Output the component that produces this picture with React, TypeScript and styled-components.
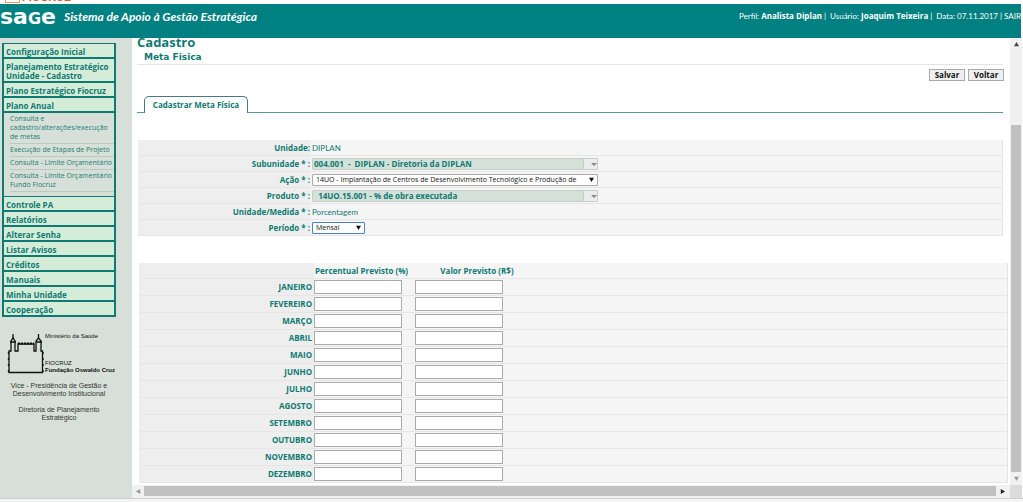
import React from 'react';
import styled, { createGlobalStyle } from 'styled-components';

const teal = '#0f7a72';
const boldFace = '"Open Sans", "Noto Sans", sans-serif';
const textFace = 'Lato, "Open Sans", sans-serif';

const GlobalStyle = createGlobalStyle`
  *, *::before, *::after { box-sizing: border-box; }
  body {
    margin: 0;
    background: #fff;
    color: ${teal};
    font: 8px/12px ${textFace};
  }
`;

const Page = styled.div`
  display: flex;
  flex-direction: column;
  min-height: 100vh;
`;

const PortalStrip = styled.div`
  display: flex;
  align-items: flex-end;
  gap: 2px;
  height: 4px;
  padding-left: 5px;
  overflow: hidden;
  color: #e4572e;
  font: bold 11px/14px "Liberation Sans", sans-serif;
  svg { flex: none; margin-bottom: 1px; }
`;

const Header = styled.header`
  display: flex;
  align-items: flex-start;
  height: 34px;
  margin-right: 2px;
  background: #008080;
  color: #fff;
`;

const Brand = styled.div`
  display: flex;
  align-items: baseline;
  width: 64px;
  padding-top: 1px;
  font: bold 22px/24px "DejaVu Sans", sans-serif;
  small { font-size: 16px; }
`;

const SystemName = styled.h1`
  flex: 1;
  margin: 0;
  padding-top: 5px;
  font: italic bold 12px/16px Lato, sans-serif;
  white-space: nowrap;
`;

const Session = styled.div`
  display: flex;
  gap: 4px;
  padding-top: 6px;
  white-space: nowrap;
  b { font-family: ${boldFace}; }
  a { color: #fff; text-decoration: none; }
`;

const Body = styled.div`
  display: flex;
  flex: 1;
`;

const Sidebar = styled.aside`
  flex: none;
  width: 132px;
  padding: 5px 16px 0 2px;
  background: #d6e0d9;
`;

const Menu = styled.nav`
  border: 1px solid ${teal};
  border-width: 1px 2px 0;
`;

const MenuLink = styled.a`
  display: block;
  padding: 3px 2px 1px;
  border-bottom: 2px solid ${teal};
  background: #d5ecd9;
  color: ${teal};
  font: bold 8px/9px ${boldFace};
  text-decoration: none;
`;

const Submenu = styled.div`
  display: flex;
  flex-direction: column;
  padding: 0 0 4px 6px;
  border-bottom: 1px solid ${teal};
`;

const SubLink = styled.a`
  padding: 1px 0 2px;
  border-bottom: 1px solid #bccac1;
  color: #1d7b72;
  font: 7px/9px ${boldFace};
  text-decoration: none;
  white-space: nowrap;
`;

const Institution = styled.div`
  display: flex;
  gap: 1px;
  margin: 16px 0 0 5px;
  color: #111;
  font: 6px/7px "Liberation Sans", sans-serif;
  white-space: nowrap;
`;

const InstitutionText = styled.div`
  display: flex;
  flex-direction: column;
  justify-content: space-between;
`;

const Department = styled.p`
  margin: 8px 0 0;
  color: #333;
  font: 7px/8px "Liberation Sans", sans-serif;
  text-align: center;
`;

const Frame = styled.div`
  display: grid;
  flex: 1;
  min-width: 0;
  grid-template-columns: 1fr 12px;
  grid-template-rows: 1fr 13px;
  margin-right: 1px;
`;

const Content = styled.main`
  min-width: 0;
  padding: 0 2px 1px 5px;
`;

const Title = styled.h2`
  margin: -3px 0 0;
  font: bold 13px/14px ${boldFace};
`;

const Subtitle = styled.h3`
  margin: 0 5px 0 0;
  padding: 2px 0 1px 7px;
  border-bottom: 1px solid #e4e4e4;
  font: bold 9px/12px "DejaVu Sans", sans-serif;
`;

const Actions = styled.div`
  display: flex;
  justify-content: flex-end;
  gap: 3px;
  margin: 4px 4px 15px 0;
`;

const ActionButton = styled.button`
  width: 36px;
  height: 12px;
  padding: 0;
  border: 1px solid #aaa;
  background: #efefef;
  color: #111;
  font: bold 8px/10px ${boldFace};
`;

const Tabs = styled.div`
  display: flex;
  margin: 0 5px 27px 0;
  padding-left: 7px;
  border-bottom: 1px solid #4f9b96;
`;

const Tab = styled.button`
  height: 17px;
  width: 104px;
  margin-bottom: -1px;
  padding: 0;
  border: 1px solid #47788e;
  border-bottom: 0;
  border-radius: 5px 5px 0 0;
  background: #fff;
  color: ${teal};
  font: bold 8px/14px ${boldFace};
`;

const Fields = styled.div`
  margin: 0 5px 27px 1px;
  border-right: 1px solid #e4e4e4;
  background: linear-gradient(to right, #eee 173px, #f5f5f5 173px);
`;

const Field = styled.div`
  display: flex;
  align-items: center;
  gap: 2px;
  height: 16px;
  border-bottom: 1px solid #e6e6e6;
`;

const FieldLabel = styled.label`
  width: 172px;
  font-family: ${boldFace};
  font-weight: bold;
  text-align: right;
`;

const Select = styled.select<{ $width: number; $active?: boolean }>`
  width: ${p => p.$width}px;
  height: 12px;
  padding: 0 13px 0 3px;
  border: 1px solid ${p => (p.$active ? '#4a7fd6' : '#aaa')};
  border-radius: 1px;
  appearance: none;
  background: #fff;
  color: #111;
  font: 7px/10px ${boldFace};
`;

const SelectBox = styled.span`
  display: inline-grid;
  align-items: center;
  > * { grid-area: 1 / 1; }
  > svg { justify-self: end; margin-right: 4px; pointer-events: none; }
`;

const LockedSelect = styled(Select)`
  border-color: #c3d0c8;
  background: linear-gradient(to left, #ececec 13px, #c3d0c8 13px, #c3d0c8 14px, #d4e1d9 14px);
  color: ${teal};
  font: bold 8px/10px ${boldFace};
  padding-left: 1px;
  opacity: 1;
`;

const LockedArrow = styled.svg`
  && { margin-right: 1px; }
`;

const Months = styled.table`
  width: 100%;
  padding-left: 2px;
  border-spacing: 0;
  table-layout: fixed;
  td, th { height: 17px; padding: 0; border-bottom: 1px solid #e6e6e6; background: #f5f5f5; }
  th { font-family: ${boldFace}; white-space: nowrap; }
  thead td, thead th { height: 16px; }
  tr > :first-child { background: #eee; }
  tr > :last-child { border-right: 1px solid #e4e4e4; }
`;

const ColumnName = styled.th<{ $align: 'left' | 'center' }>`
  && { padding-left: 1px; text-align: ${p => p.$align}; }
`;

const MonthName = styled.th`
  && { padding-right: 2px; text-align: right; }
`;

const Amount = styled.input`
  display: block;
  width: 88px;
  height: 14px;
  padding: 0 2px;
  border: 1px solid #aaa;
  background: #fff;
  font: 8px/12px ${textFace};
`;

const Scrollbar = styled.div<{ $vertical?: boolean }>`
  display: flex;
  flex-direction: ${p => (p.$vertical ? 'column' : 'row')};
  align-items: center;
  justify-content: space-between;
  padding: ${p => (p.$vertical ? '4px 1px' : '1px 5px 2px 4px')};
  background: #f1f1f1;
`;

const Thumb = styled.div<{ $vertical?: boolean }>`
  flex: 1;
  align-self: stretch;
  margin: ${p => (p.$vertical ? '78px 0 4px' : '0 4px 0 3px')};
  background: #c1c1c1;
`;

const Corner = styled.div`
  background: #dcdcdc;
`;

const StatusEdge = styled.footer`
  height: 4px;
  border-top: 1px solid #cfcfcf;
  background: #f4f4f4;
`;

const Arrow = ({ turn = 0, color = '#111' }: { turn?: number; color?: string }) => (
  <svg width="5" height="5" viewBox="0 0 6 6" aria-hidden="true">
    <path d="M0 1H6L3 6Z" fill={color} transform={`rotate(${turn} 3 3)`} />
  </svg>
);

const MutedArrow = () => (
  <LockedArrow width="6" height="4" viewBox="0 0 6 4" aria-hidden="true">
    <path d="M0 1H6L3 4Z" fill="#888" />
  </LockedArrow>
);

const Castle = () => (
  <svg width="37" height="41" viewBox="0 0 37 41" fill="none" stroke="#111" strokeWidth="1.3" aria-hidden="true">
    <path d="M2 39.500V18H4V8L6 5L8 8V18H11V11H27V18H29V8L31.500 5L34 8V18H35.500V39.500Z" />
    <path d="M6 1V6M31.500 1V6M3 9H9M29 9H35" />
    <path d="M11 10.500H27" strokeWidth="2" strokeDasharray="2 1" />
    <path d="M1.500 19V39M36 19V39" strokeDasharray="2 4" />
  </svg>
);

const topMenu = [
  ['Configuração Inicial'],
  ['Planejamento Estratégico', 'Unidade - Cadastro'],
  ['Plano Estratégico Fiocruz'],
  ['Plano Anual'],
];
const bottomMenu = ['Controle PA', 'Relatórios', 'Alterar Senha', 'Listar Avisos', 'Créditos', 'Manuais', 'Minha Unidade', 'Cooperação'];
const months = ['JANEIRO', 'FEVEREIRO', 'MARÇO', 'ABRIL', 'MAIO', 'JUNHO', 'JULHO', 'AGOSTO', 'SETEMBRO', 'OUTUBRO', 'NOVEMBRO', 'DEZEMBRO'];

export default function App() {
  return (
    <Page>
      <GlobalStyle />
      <PortalStrip>
        <svg width="15" height="12" viewBox="0 0 15 12" fill="none" stroke="#e39a5c" aria-hidden="true">
          <path d="M.5 .5H14.500V11.500H.5Z" />
        </svg>
        FIOCRUZ
      </PortalStrip>
      <Header>
        <Brand>sa<small>G</small>e</Brand>
        <SystemName>Sistema de Apoio à Gestão Estratégica</SystemName>
        <Session>
          <span>Perfil: <b>Analista Diplan</b> |</span>
          <span>Usuário: <b>Joaquim Teixeira</b> |</span>
          <span>Data: 07.11.2017 | <a href="#sair">SAIR</a></span>
        </Session>
      </Header>
      <Body>
        <Sidebar>
          <Menu>
            {topMenu.map(([first, second]) => (
              <MenuLink key={first} href="#menu">{first}{second && <><br />{second}</>}</MenuLink>
            ))}
            <Submenu>
              <SubLink href="#metas">Consulta e<br />cadastro/alterações/execução<br />de metas</SubLink>
              <SubLink href="#etapas">Execução de Etapas de Projeto</SubLink>
              <SubLink href="#limite">Consulta - Limite Orçamentário</SubLink>
              <SubLink href="#limite-fundo">Consulta - Limite Orçamentário<br />Fundo Fiocruz</SubLink>
            </Submenu>
            {bottomMenu.map(item => <MenuLink key={item} href="#menu">{item}</MenuLink>)}
          </Menu>
          <Institution>
            <Castle />
            <InstitutionText>
              <span>Ministério da Saúde</span>
              <span>FIOCRUZ<br /><b>Fundação Oswaldo Cruz</b></span>
            </InstitutionText>
          </Institution>
          <Department>Vice - Presidência de Gestão e<br />Desenvolvimento Institucional</Department>
          <Department>Diretoria de Planejamento<br />Estratégico</Department>
        </Sidebar>
        <Frame>
          <Content>
            <Title>Cadastro</Title>
            <Subtitle>Meta Fisica</Subtitle>
            <Actions>
              <ActionButton type="submit" form="meta">Salvar</ActionButton>
              <ActionButton type="button">Voltar</ActionButton>
            </Actions>
            <Tabs role="tablist">
              <Tab type="button" role="tab" aria-selected="true">Cadastrar Meta Física</Tab>
            </Tabs>
            <form id="meta">
              <Fields>
                <Field>
                  <FieldLabel htmlFor="unidade">Unidade:</FieldLabel>
                  <output id="unidade">DIPLAN</output>
                </Field>
                <Field>
                  <FieldLabel htmlFor="subunidade">Subunidade * :</FieldLabel>
                  <SelectBox>
                    <LockedSelect id="subunidade" $width={286} disabled>
                      <option>004.001 &nbsp;-&nbsp; DIPLAN - Diretoria da DIPLAN</option>
                    </LockedSelect>
                    <MutedArrow />
                  </SelectBox>
                </Field>
                <Field>
                  <FieldLabel htmlFor="acao">Ação * :</FieldLabel>
                  <SelectBox>
                    <Select id="acao" $width={286}>
                      <option>14UO - Implantação de Centros de Desenvolvimento Tecnológico e Produção de</option>
                    </Select>
                    <Arrow />
                  </SelectBox>
                </Field>
                <Field>
                  <FieldLabel htmlFor="produto">Produto * :</FieldLabel>
                  <SelectBox>
                    <LockedSelect id="produto" $width={286} disabled>
                      <option>&nbsp; 14UO.15.001 - % de obra executada</option>
                    </LockedSelect>
                    <MutedArrow />
                  </SelectBox>
                </Field>
                <Field>
                  <FieldLabel htmlFor="medida">Unidade/Medida * :</FieldLabel>
                  <output id="medida">Porcentagem</output>
                </Field>
                <Field>
                  <FieldLabel htmlFor="periodo">Período * :</FieldLabel>
                  <SelectBox>
                    <Select id="periodo" $width={53} $active>
                      <option>Mensal</option>
                    </Select>
                    <Arrow />
                  </SelectBox>
                </Field>
              </Fields>
              <Months>
                <colgroup>
                  <col style={{ width: 175 }} />
                  <col style={{ width: 101 }} />
                  <col style={{ width: 123 }} />
                  <col />
                </colgroup>
                <thead>
                  <tr>
                    <td />
                    <ColumnName scope="col" $align="left">Percentual Previsto (%)</ColumnName>
                    <ColumnName scope="col" $align="center">Valor Previsto (R$)</ColumnName>
                    <td />
                  </tr>
                </thead>
                <tbody>
                  {months.map(month => (
                    <tr key={month}>
                      <MonthName scope="row">{month}</MonthName>
                      <td><Amount aria-label={`${month} percentual previsto`} /></td>
                      <td><Amount aria-label={`${month} valor previsto`} /></td>
                      <td />
                    </tr>
                  ))}
                </tbody>
              </Months>
            </form>
          </Content>
          <Scrollbar $vertical>
            <Arrow turn={180} color="#444" />
            <Thumb $vertical />
            <Arrow color="#999" />
          </Scrollbar>
          <Scrollbar>
            <Arrow turn={90} color="#999" />
            <Thumb />
            <Arrow turn={270} color="#222" />
          </Scrollbar>
          <Corner />
        </Frame>
      </Body>
      <StatusEdge />
    </Page>
  );
}
